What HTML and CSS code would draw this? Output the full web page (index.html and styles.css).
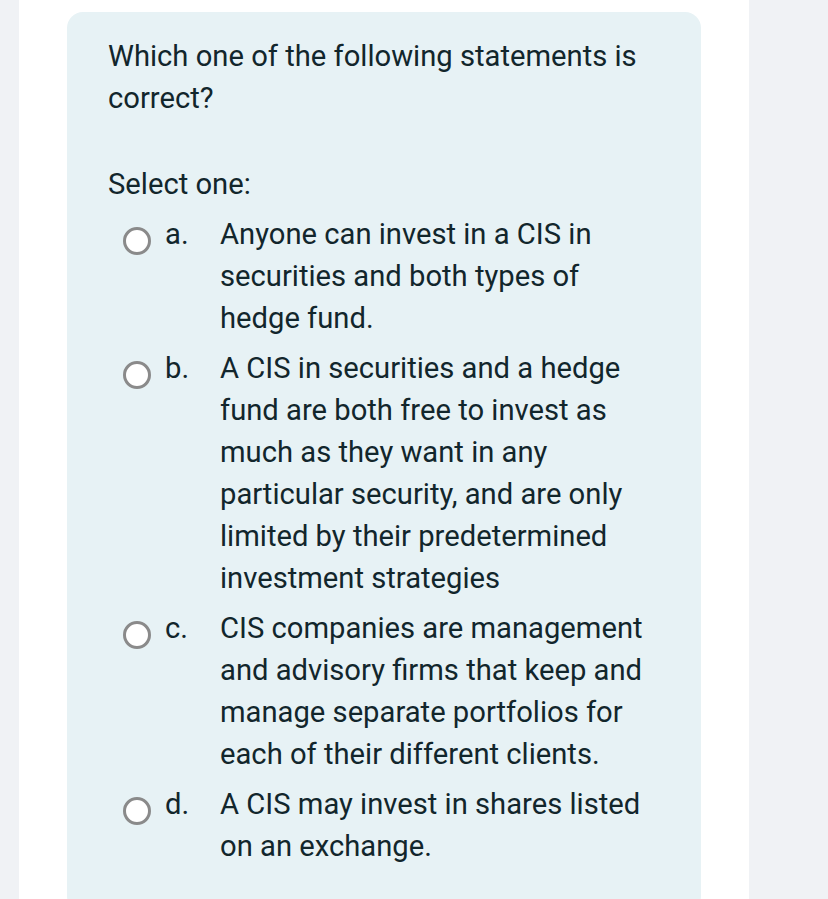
FILE: index.html
```html
<!DOCTYPE html>
<html>
<head>
<meta charset="utf-8">
<link rel="stylesheet" href="styles.css">
</head>
<body>
<div class="page">
  <div class="side-left"></div>
  <main class="main">
    <section class="card">
      <p class="question">Which one of the following statements is correct?</p>
      <p class="prompt">Select one:</p>
      <div class="options">
        <div class="option">
          <span class="radio"></span>
          <span class="letter">a.</span>
          <span class="text">Anyone can invest in a CIS in securities and both types of hedge fund.</span>
        </div>
        <div class="option">
          <span class="radio"></span>
          <span class="letter">b.</span>
          <span class="text">A CIS in securities and a hedge fund are both free to invest as much as they want in any particular security, and are only limited by their predetermined investment strategies</span>
        </div>
        <div class="option">
          <span class="radio"></span>
          <span class="letter">c.</span>
          <span class="text">CIS companies are management and advisory firms that keep and manage separate portfolios for each of their different clients.</span>
        </div>
        <div class="option">
          <span class="radio"></span>
          <span class="letter">d.</span>
          <span class="text">A CIS may invest in shares listed on an exchange.</span>
        </div>
      </div>
    </section>
  </main>
  <div class="side-right"></div>
</div>
</body>
</html>
```

FILE: styles.css
```css
* { box-sizing: border-box; }
html, body {
  margin: 0;
  padding: 0;
  height: 100%;
  overflow: hidden;
}
body {
  font-family: Roboto, "Liberation Sans", sans-serif;
  color: #12262c;
  background: #ffffff;
}
.page {
  display: flex;
  width: 828px;
  height: 899px;
}
.side-left {
  width: 19px;
  flex: none;
  background: #f0f2f5;
}
.side-right {
  flex: 1;
  background: #f0f2f5;
}
.main {
  width: 730px;
  flex: none;
  background: #ffffff;
  padding: 12px 0 0 48px;
}
.card {
  width: 634px;
  min-height: 900px;
  background: #e7f2f5;
  border-radius: 16px;
  padding: 23px 41px 30px 41px;
}
.question {
  margin: 0;
  font-size: 29.2px;
  line-height: 42px;
}
.prompt {
  margin: 44px 0 0 0;
  font-size: 29.2px;
  line-height: 42px;
}
.options {
  margin-top: 8px;
  display: flex;
  flex-direction: column;
  gap: 8px;
}
.option {
  display: flex;
  align-items: flex-start;
  font-size: 29.2px;
  line-height: 42px;
}
.radio {
  flex: none;
  width: 28px;
  height: 28px;
  border: 3px solid #8a8a8a;
  border-radius: 50%;
  background: #ffffff;
  margin: 14px 0 0 15px;
}
.letter {
  flex: none;
  width: 69px;
  padding-left: 14px;
}
.text {
  flex: 1;
}
```
